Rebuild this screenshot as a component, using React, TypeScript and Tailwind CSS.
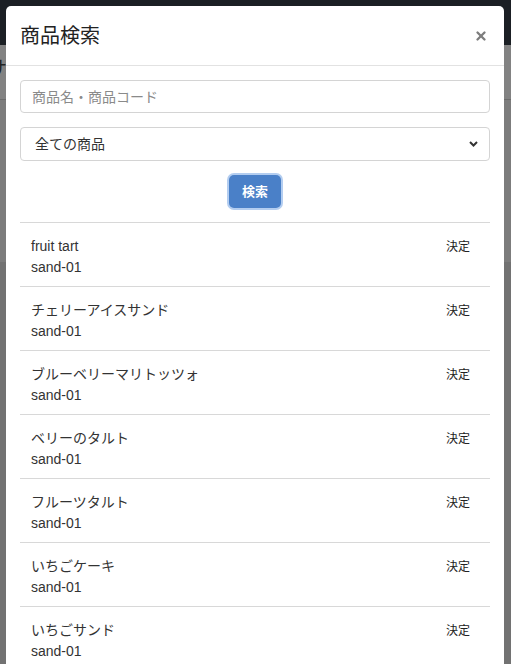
import { X } from 'lucide-react';

const items = [
  'fruit tart',
  'チェリーアイスサンド',
  'ブルーベリーマリトッツォ',
  'ベリーのタルト',
  'フルーツタルト',
  'いちごケーキ',
  'いちごサンド',
];

const font = { fontFamily: '"Liberation Sans", "Noto Sans CJK JP", sans-serif' };

export default function App() {
  return (
    <div className="relative h-[664px] w-full overflow-hidden bg-[#767676]" style={font}>
      {/* page behind the overlay */}
      <div className="h-[45px] bg-[#1b1f24]" />
      <div className="h-[55px] border-b border-[#6c6c6c] bg-[#828282] pl-0 pt-[14px] text-[20px] leading-none text-[#222]">
        <span className="-ml-[13px]">サ</span>
      </div>
      <div className="h-[162px] bg-[#7c7c7c]" />
      <div className="h-full bg-[#727272]" />

      {/* modal */}
      <div className="absolute left-[6px] top-[6px] w-[498px] rounded-t-[5px] bg-white">
        <div className="flex h-[60px] items-center justify-between border-b border-[#e2e2e2] px-[14px]">
          <h1 className="text-[20px] leading-none text-[#222]">商品検索</h1>
          <button className="mr-[2px] text-[#7d7d7d]">
            <X className="h-[14px] w-[14px]" strokeWidth={4} />
          </button>
        </div>

        <div className="px-[14px] pt-[14px]">
          <input
            className="block h-[33px] w-full rounded-[4px] border border-[#d4d4d4] px-[11px] text-[14px] text-[#333] placeholder-[#8a8a8a] outline-none"
            placeholder="商品名・商品コード"
          />
          <div className="relative mt-[14px]">
            <select className="block h-[34px] w-full appearance-none rounded-[4px] border border-[#d4d4d4] bg-white px-[14px] text-[14px] text-[#333] outline-none">
              <option>全ての商品</option>
            </select>
            <svg
              className="pointer-events-none absolute right-[12px] top-1/2 h-[7px] w-[9px] -translate-y-1/2"
              viewBox="0 0 9 7"
              fill="none"
              stroke="#333"
              strokeWidth="2"
            >
              <path d="M1 1.5 L4.5 5 L8 1.5" />
            </svg>
          </div>
          <div className="flex justify-center pt-[14px]">
            <button className="h-[33px] w-[52px] rounded-[5px] bg-[#4a80c8] text-[13px] font-bold text-white ring-2 ring-[#b3cdf0]">
              検索
            </button>
          </div>

          <ul className="mt-[14px] border-t border-[#d8d8d8]">
            {items.map((name) => (
              <li
                key={name}
                className="flex h-[64px] items-start justify-between border-b border-[#d8d8d8] pl-[11px] pr-[20px] pt-[13px]"
              >
                <div className="text-[14px] leading-[21px] text-[#333]">
                  <div>{name}</div>
                  <div>sand-01</div>
                </div>
                <button className="pt-[4px] text-[12px] leading-[14px] text-[#222]">決定</button>
              </li>
            ))}
          </ul>
        </div>
      </div>
    </div>
  );
}
